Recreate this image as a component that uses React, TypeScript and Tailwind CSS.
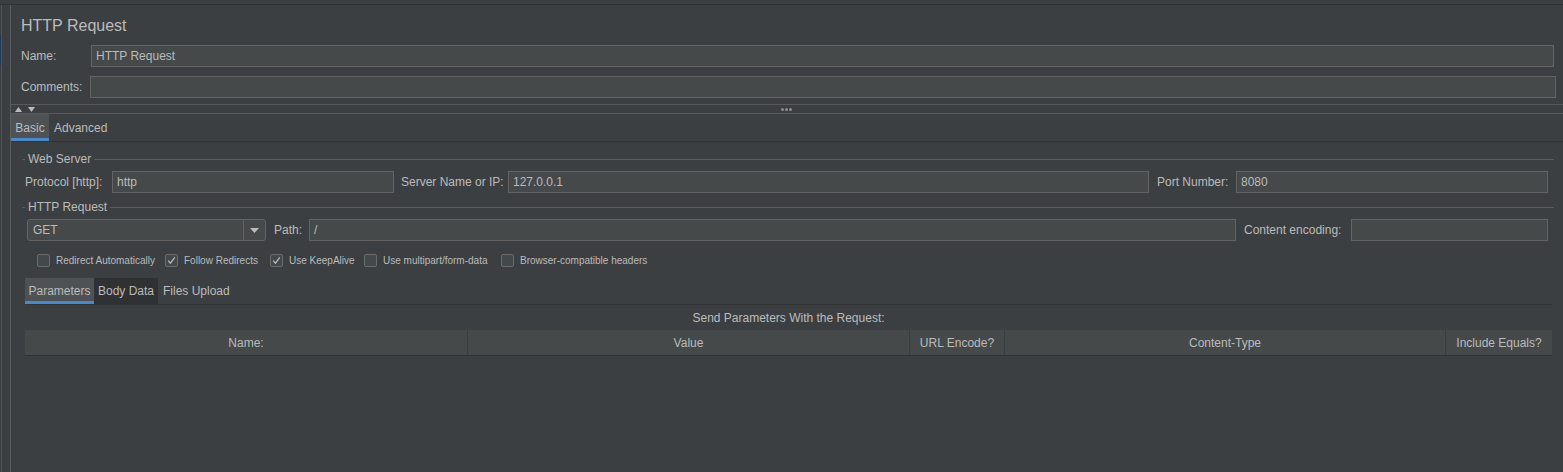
import React from 'react';

const Input = ({ value = '', className = '' }: { value?: string; className?: string }) => (
  <div className={`h-[22px] bg-[#45494a] border border-[#646464] flex items-center pl-[4px] text-[12px] text-[#bbbbbb] ${className}`}>
    {value}
  </div>
);

const FieldsetTitle = ({ title }: { title: string }) => (
  <div className="flex items-center h-[12px] ml-[11px] mr-[9px]">
    <div className="w-[3px] h-px bg-[#5a5c5e]" />
    <span className="px-[3px] text-[12px] text-[#bbbbbb] leading-none">{title}</span>
    <div className="flex-1 h-px bg-[#5a5c5e]" />
  </div>
);

const Check = ({ label, checked, width }: { label: string; checked?: boolean; width?: string }) => (
  <div className={`flex items-center ${width || ''}`}>
    <div className="w-[13px] h-[13px] rounded-[2px] border border-[#6b6b6b] bg-[#43494a] flex items-center justify-center shrink-0">
      {checked && (
        <svg width="11" height="11" viewBox="0 0 11 11">
          <path d="M2.2 5.6 L4.4 8.2 L8.8 2.4" fill="none" stroke="#bbbbbb" strokeWidth="1.2" />
        </svg>
      )}
    </div>
    <span className="ml-[6px] text-[10px] text-[#bbbbbb] whitespace-nowrap">{label}</span>
  </div>
);

const columns = [
  { name: 'Name:', w: 'w-[443px]' },
  { name: 'Value', w: 'w-[442px]' },
  { name: 'URL Encode?', w: 'w-[95px]' },
  { name: 'Content-Type', w: 'w-[441px]' },
  { name: 'Include Equals?', w: 'flex-1' },
];

export default function App() {
  return (
    <div
      className="w-[1563px] h-[472px] bg-[#3c3f41] flex flex-col overflow-hidden text-[#bbbbbb]"
      style={{ fontFamily: '"Liberation Sans", Arial, sans-serif' }}
    >
      {/* top strip */}
      <div className="h-[5px] shrink-0 border-b border-[#2f3133]" />

      <div className="flex flex-1">
        {/* left gutter */}
        <div className="w-[11px] shrink-0 flex">
          <div className="w-px flex flex-col">
            <div className="h-[30px]" />
            <div className="h-[30px] bg-[#1f3a57]" />
          </div>
          <div className="w-px bg-[#505354]" />
          <div className="flex-1 border-r border-[#5a5d5f]" />
        </div>

        {/* main */}
        <div className="flex-1 flex flex-col">
          <div className="pt-[6px] pl-[10px] h-[36px] flex items-center text-[16px]">HTTP Request</div>

          <div className="mt-[4px] flex items-center pl-[10px] pr-[9px]">
            <span className="w-[70px] text-[12px]">Name:</span>
            <Input value="HTTP Request" className="flex-1" />
          </div>
          <div className="mt-[9px] flex items-center pl-[10px] pr-[7px]">
            <span className="w-[69px] text-[12px]">Comments:</span>
            <Input className="flex-1" />
          </div>

          {/* splitter */}
          <div className="mt-[6px] h-[10px] border-t border-b border-[#58595b] relative flex items-center">
            <div className="flex items-center gap-[6px] ml-[4px]">
              <svg width="7" height="5" viewBox="0 0 7 5">
                <path d="M0 5 L3.5 0 L7 5 Z" fill="#bbbbbb" />
              </svg>
              <svg width="7" height="5" viewBox="0 0 7 5">
                <path d="M0 0 L3.5 5 L7 0 Z" fill="#bbbbbb" />
              </svg>
            </div>
            <div className="flex-1 flex justify-center gap-[1px] pr-[26px]">
              <div className="w-[3px] h-[3px] rounded-full bg-[#8c8c8c]" />
              <div className="w-[3px] h-[3px] rounded-full bg-[#8c8c8c]" />
              <div className="w-[3px] h-[3px] rounded-full bg-[#8c8c8c]" />
            </div>
          </div>

          {/* tabs */}
          <div className="h-[28px] flex border-b border-[#323435] text-[12px]">
            <div className="w-[38px] justify-center bg-[#4e5254] border-b-[3px] border-[#4a88c7] flex items-center pt-[3px]">Basic</div>
            <div className="px-[5px] flex items-center">Advanced</div>
          </div>

          {/* Web Server */}
          <div className="mt-[11px]">
            <FieldsetTitle title="Web Server" />
          </div>
          <div className="mt-[6px] flex items-center pl-[14px] text-[12px]">
            <span className="w-[87px] whitespace-nowrap">Protocol [http]:</span>
            <Input value="http" className="w-[282px]" />
            <span className="ml-[7px] w-[107px] whitespace-nowrap">Server Name or IP:</span>
            <Input value="127.0.0.1" className="w-[641px]" />
            <span className="ml-[8px] w-[79px] whitespace-nowrap">Port Number:</span>
            <Input value="8080" className="w-[312px]" />
          </div>

          {/* HTTP Request */}
          <div className="mt-[8px]">
            <FieldsetTitle title="HTTP Request" />
          </div>
          <div className="mt-[6px] flex items-center pl-[16px] text-[12px]">
            <div className="w-[239px] h-[22px] rounded-[3px] bg-[#45494a] border border-[#646464] flex items-stretch">
              <div className="flex-1 flex items-center pl-[5px]">GET</div>
              <div className="w-[22px] border-l border-[#646464] flex items-center justify-center">
                <svg width="9" height="5" viewBox="0 0 9 5">
                  <path d="M0 0 L4.5 5 L9 0 Z" fill="#bbbbbb" />
                </svg>
              </div>
            </div>
            <span className="ml-[8px] w-[35px]">Path:</span>
            <Input value="/" className="w-[927px]" />
            <span className="ml-[8px] w-[107px] whitespace-nowrap">Content encoding:</span>
            <Input className="w-[197px]" />
          </div>

          {/* checkboxes */}
          <div className="mt-[12px] flex items-center pl-[26px] h-[15px]">
            <Check label="Redirect Automatically" width="w-[128px]" />
            <Check label="Follow Redirects" checked width="w-[105px]" />
            <Check label="Use KeepAlive" checked width="w-[94px]" />
            <Check label="Use multipart/form-data" width="w-[137px]" />
            <Check label="Browser-compatible headers" />
          </div>

          {/* sub tabs */}
          <div className="mt-[10px] ml-[14px] mr-[11px] h-[27px] flex border-b border-[#323435] text-[12px]">
            <div className="w-[69px] justify-center bg-[#4e5254] border-b-[3px] border-[#4a88c7] flex items-center pt-[3px]">Parameters</div>
            <div className="w-[64px] justify-center bg-[#2f3133] flex items-center">Body Data</div>
            <div className="px-[5px] flex items-center">Files Upload</div>
          </div>

          <div className="ml-[14px] mr-[11px] h-[25px] flex items-center justify-center text-[12px]">
            Send Parameters With the Request:
          </div>

          {/* table header */}
          <div className="ml-[14px] mr-[11px] h-[26px] flex bg-[#45494a] border-b border-[#323435] text-[12px]">
            {columns.map((c, i) => (
              <div
                key={c.name}
                className={`${c.w} flex items-center justify-center ${i < columns.length - 1 ? 'border-r border-[#3a3d3f]' : ''}`}
              >
                {c.name}
              </div>
            ))}
          </div>
        </div>
      </div>
    </div>
  );
}
